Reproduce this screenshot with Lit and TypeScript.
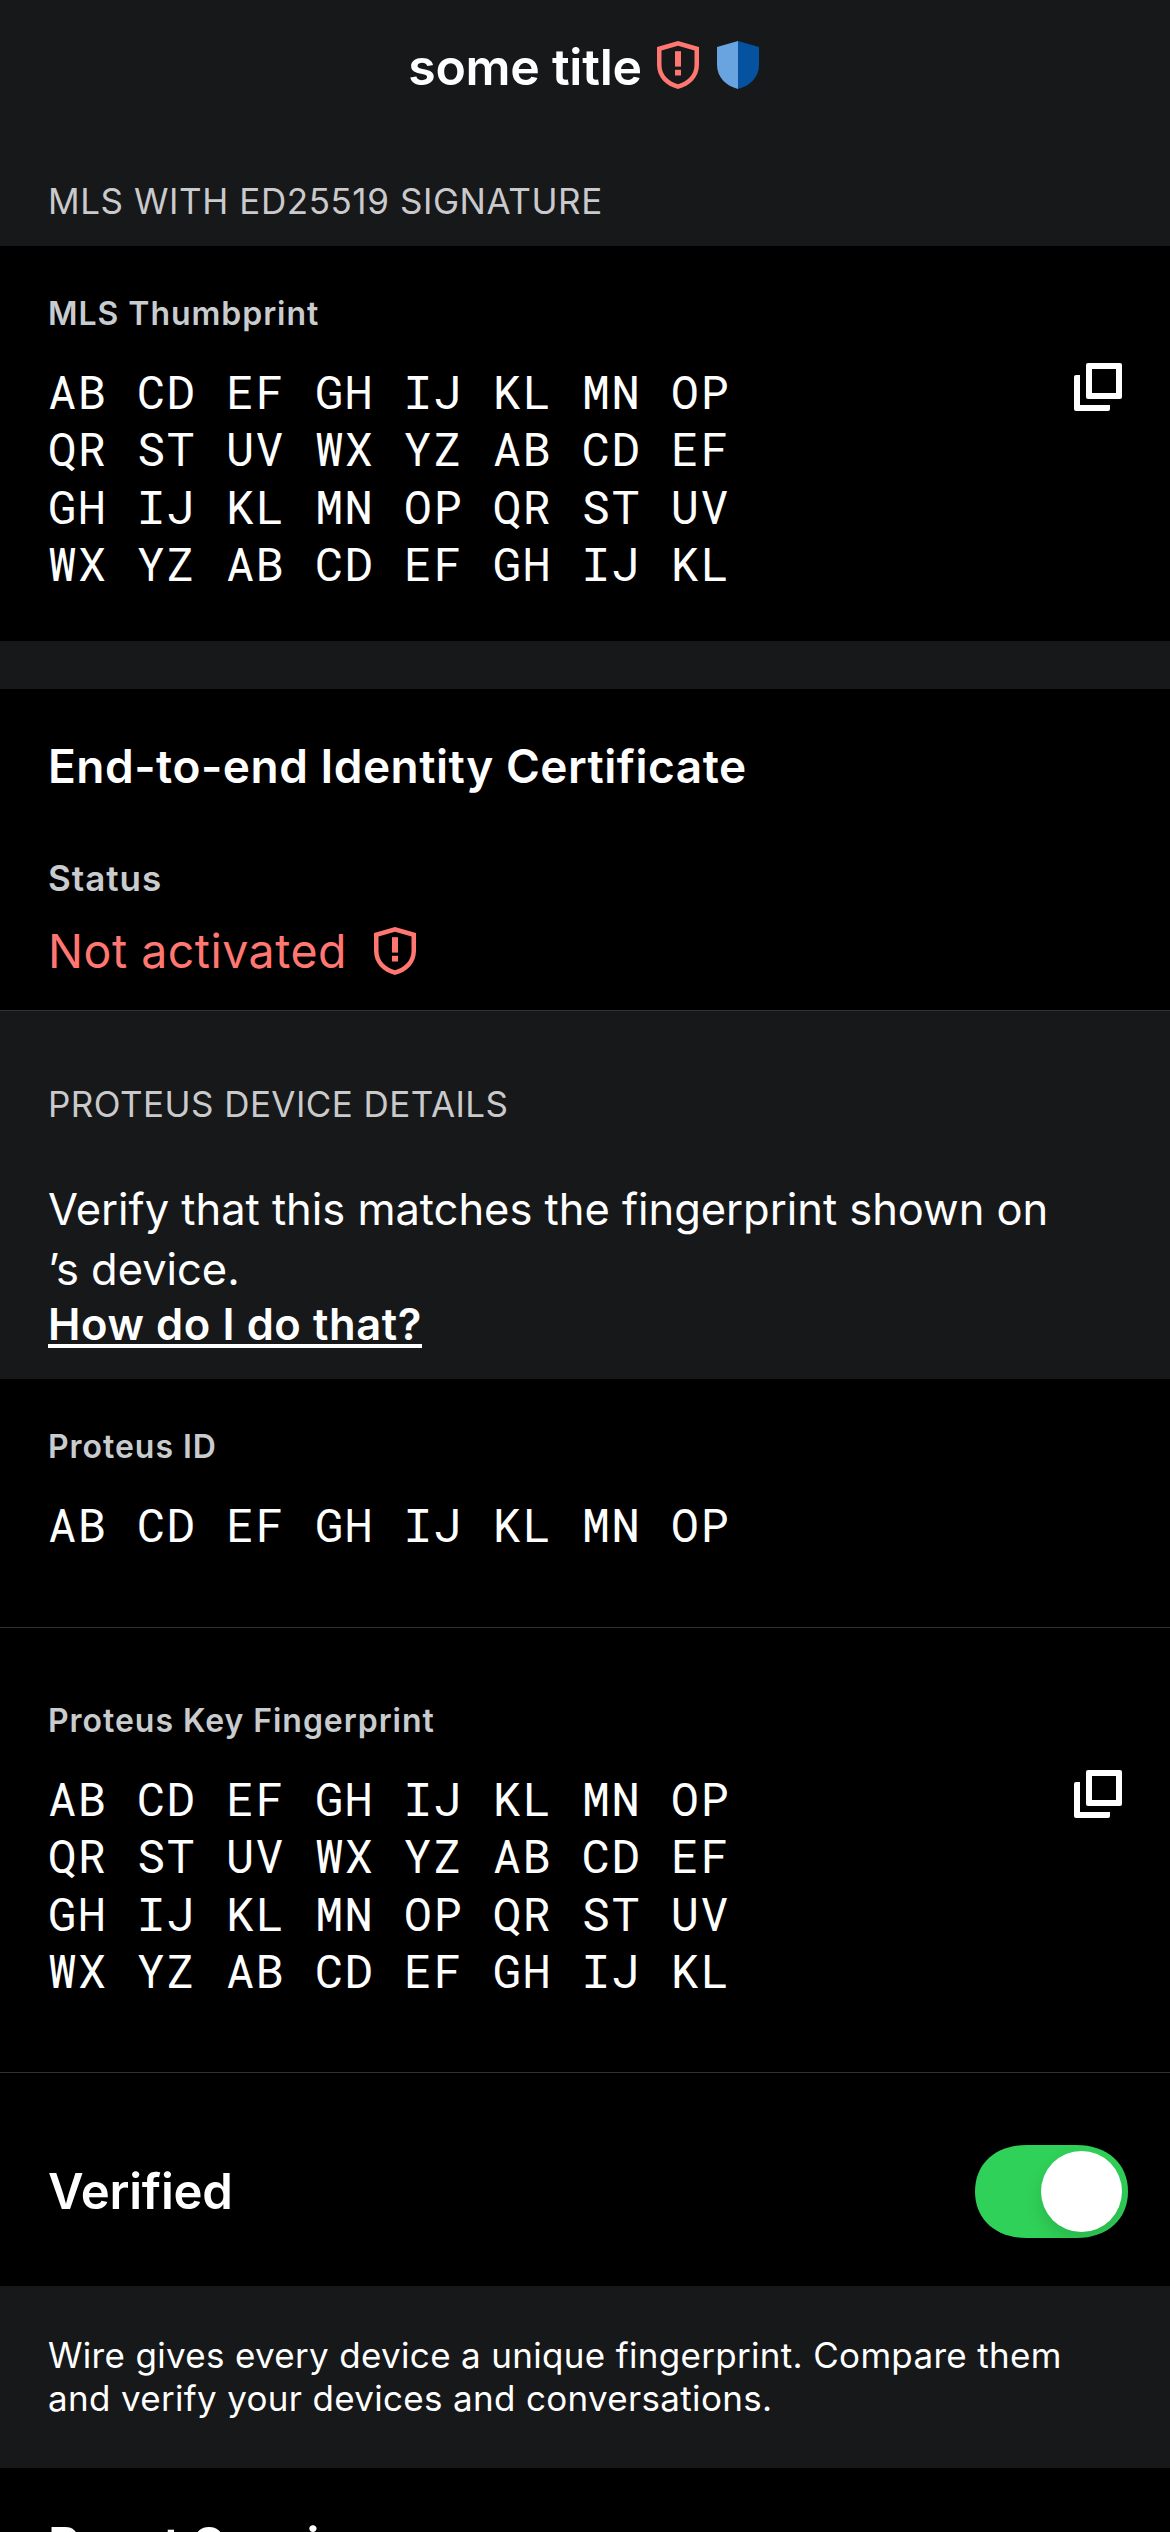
import { LitElement, html, css, nothing } from "lit";
import { customElement, property } from "lit/decorators.js";

const LONG_FINGERPRINT = [
  "AB CD EF GH IJ KL MN OP",
  "QR ST UV WX YZ AB CD EF",
  "GH IJ KL MN OP QR ST UV",
  "WX YZ AB CD EF GH IJ KL",
];
const SHORT_ID = ["AB CD EF GH IJ KL MN OP"];

const shieldWarning = html`
  <svg width="48" height="48" viewBox="0 0 48 48" fill="#ff7770" aria-hidden="true">
    <path
      fill-rule="evenodd"
      d="M24 0 L45 6 V24 C45 36 36 45 24 48 C12 45 3 36 3 24 V6 Z
         M24 4.8 L7.5 9.6 V24 C7.5 33.6 14.6 40.8 24 43.2 C33.4 40.8 40.5 33.6 40.5 24 V9.6 Z"
    />
    <rect x="21" y="10.2" width="6" height="15.4" />
    <rect x="21" y="28.8" width="6" height="5.7" />
  </svg>
`;

const shieldVerified = html`
  <svg width="48" height="48" viewBox="0 0 48 48" aria-hidden="true">
    <path fill="#6aa4e0" d="M24 0 V48 C12 45 3 36 3 24 V6 Z" />
    <path fill="#0552a1" d="M24 0 L45 6 V24 C45 36 36 45 24 48 Z" />
  </svg>
`;

const copyIcon = html`
  <svg width="48" height="48" viewBox="0 0 48 48" fill="#fff" aria-hidden="true">
    <path
      fill-rule="evenodd"
      d="M14 0 H46 Q48 0 48 2 V34 Q48 36 46 36 H14 Q12 36 12 34 V2 Q12 0 14 0 Z M18 6 V30 H42 V6 Z"
    />
    <path d="M2 12 H6 V42 H36 V46 Q36 48 34 48 H2 Q0 48 0 46 V14 Q0 12 2 12 Z" />
  </svg>
`;

@customElement("key-block")
export class KeyBlock extends LitElement {
  @property() label = "";
  @property({ attribute: false }) lines: string[] = [];
  @property({ type: Boolean }) copyable = false;

  static styles = css`
    :host {
      display: flex;
      flex-direction: column;
      gap: 29px;
      padding: 0 48px;
    }
    .label {
      font-size: 32px;
      line-height: 40px;
      font-weight: 600;
      letter-spacing: 0.96px;
      color: #c9ccce;
    }
    .row {
      display: flex;
      justify-content: space-between;
      align-items: flex-start;
    }
    .mono {
      font-family: "Roboto Mono", "DejaVu Sans Mono", monospace;
      font-size: 47px;
      line-height: 57.4px;
      letter-spacing: 1.45px;
      white-space: pre;
    }
    .copy {
      display: block;
      padding: 0;
      border: 0;
      background: none;
    }
    .copy svg {
      display: block;
    }
  `;

  render() {
    return html`
      <div class="label">${this.label}</div>
      <div class="row">
        <div class="mono">${this.lines.map((l) => html`<div>${l}</div>`)}</div>
        ${this.copyable
          ? html`<button class="copy" aria-label="Copy">${copyIcon}</button>`
          : nothing}
      </div>
    `;
  }
}

@customElement("toggle-switch")
export class ToggleSwitch extends LitElement {
  static styles = css`
    :host,
    svg {
      display: block;
    }
  `;

  render() {
    return html`
      <svg width="153" height="93" viewBox="0 0 153 93">
        <defs>
          <clipPath id="track">
            <path
              d="M52 0 H101 C133 0 153 19 153 46.5 C153 74 133 93 101 93 H52 C20 93 0 74 0 46.5 C0 19 20 0 52 0 Z"
            />
          </clipPath>
          <filter id="soft" x="-50%" y="-50%" width="200%" height="200%">
            <feGaussianBlur stdDeviation="9" />
          </filter>
        </defs>
        <g clip-path="url(#track)">
          <rect width="153" height="93" fill="#30d158" />
          <circle cx="106.5" cy="55.5" r="40.5" fill="#000" opacity="0.13" filter="url(#soft)" />
        </g>
        <circle cx="106.5" cy="46.5" r="40.5" fill="#fff" />
      </svg>
    `;
  }
}

@customElement("app-root")
export class AppRoot extends LitElement {
  static styles = css`
    :host {
      display: block;
      width: 1170px;
      height: 2532px;
      overflow: hidden;
      background: #000;
      color: #fff;
      font-family: Inter, "Liberation Sans", sans-serif;
    }
    .screen,
    .section,
    .band {
      display: flex;
      flex-direction: column;
      box-sizing: border-box;
      flex: none;
    }
    .band {
      background: #17181a;
    }
    .nav {
      display: flex;
      justify-content: center;
      align-items: center;
      gap: 12px;
      height: 60px;
      margin-top: 35px;
    }
    .nav svg,
    .status svg {
      display: block;
      flex: none;
    }
    .title {
      font-size: 50px;
      line-height: 60px;
      font-weight: 600;
      letter-spacing: -0.27px;
      padding-top: 3px;
    }
    .caption {
      padding: 0 48px;
      font-size: 35px;
      line-height: 42px;
      letter-spacing: 0.58px;
      color: #cacacc;
    }
    .top {
      height: 246px;
    }
    .top .caption {
      margin-top: 85px;
    }
    .mls {
      height: 395px;
      padding-top: 48px;
    }
    .spacer {
      height: 48px;
    }
    .cert {
      height: 321px;
      padding: 49px 48px 0;
    }
    .heading {
      font-size: 46px;
      line-height: 56px;
      font-weight: 600;
      letter-spacing: 0.5px;
    }
    .label {
      margin-top: 63px;
      font-size: 35px;
      line-height: 42px;
      font-weight: 600;
      letter-spacing: 0.95px;
      color: #c9ccce;
    }
    .status {
      display: flex;
      align-items: center;
      gap: 24px;
      margin-top: 24px;
      font-size: 46.5px;
      line-height: 56px;
      letter-spacing: 0.48px;
      color: #ff7770;
    }
    .details {
      height: 369px;
      padding-top: 72px;
      border-top: 1px solid #303134;
    }
    .details .caption {
      letter-spacing: 0.45px;
    }
    .copytext {
      margin-top: 54px;
      padding: 0 48px;
      font-size: 43.5px;
      line-height: 60px;
      letter-spacing: -0.04px;
    }
    .link {
      display: block;
      line-height: 50px;
      font-weight: 600;
      letter-spacing: 0.59px;
      color: #fff;
      text-decoration: underline;
      text-decoration-thickness: 4px;
      text-underline-offset: 4px;
      text-decoration-skip-ink: none;
    }
    .proteus-id {
      height: 248px;
      padding-top: 48px;
    }
    .proteus-key {
      height: 445px;
      padding-top: 73px;
      border-top: 1px solid #303134;
    }
    .verified {
      flex-direction: row;
      justify-content: space-between;
      align-items: flex-start;
      height: 214px;
      padding: 72px 42px 0 48px;
      border-top: 1px solid #303134;
    }
    .action {
      font-size: 49px;
      line-height: 60px;
      font-weight: 600;
      letter-spacing: -0.2px;
    }
    .verified .action {
      padding-top: 17px;
    }
    .explain {
      height: 182px;
      padding: 48px 48px 0;
      font-size: 35px;
      line-height: 43.3px;
      letter-spacing: 0.32px;
    }
    .reset {
      padding: 48px 48px 0;
    }
  `;

  render() {
    return html`
      <div class="screen">
        <header class="band top">
          <div class="nav">
            <div class="title">some title</div>
            ${shieldWarning}${shieldVerified}
          </div>
          <div class="caption">MLS WITH ED25519 SIGNATURE</div>
        </header>

        <section class="section mls">
          <key-block label="MLS Thumbprint" .lines=${LONG_FINGERPRINT} copyable></key-block>
        </section>

        <div class="band spacer"></div>

        <section class="section cert">
          <div class="heading">End-to-end Identity Certificate</div>
          <div class="label">Status</div>
          <div class="status"><span>Not activated</span>${shieldWarning}</div>
        </section>

        <section class="band details">
          <div class="caption">PROTEUS DEVICE DETAILS</div>
          <div class="copytext">
            Verify that this matches the fingerprint shown on<br />’s device.
            <span class="link"><span>How do I do that?</span></span>
          </div>
        </section>

        <section class="section proteus-id">
          <key-block label="Proteus ID" .lines=${SHORT_ID}></key-block>
        </section>

        <section class="section proteus-key">
          <key-block label="Proteus Key Fingerprint" .lines=${LONG_FINGERPRINT} copyable></key-block>
        </section>

        <section class="section verified">
          <div class="action">Verified</div>
          <toggle-switch></toggle-switch>
        </section>

        <section class="band explain">
          <div>
            Wire gives every device a unique fingerprint. Compare them<br />and verify your devices
            and conversations.
          </div>
        </section>

        <section class="section reset">
          <div class="action">Reset Session</div>
        </section>
      </div>
    `;
  }
}
